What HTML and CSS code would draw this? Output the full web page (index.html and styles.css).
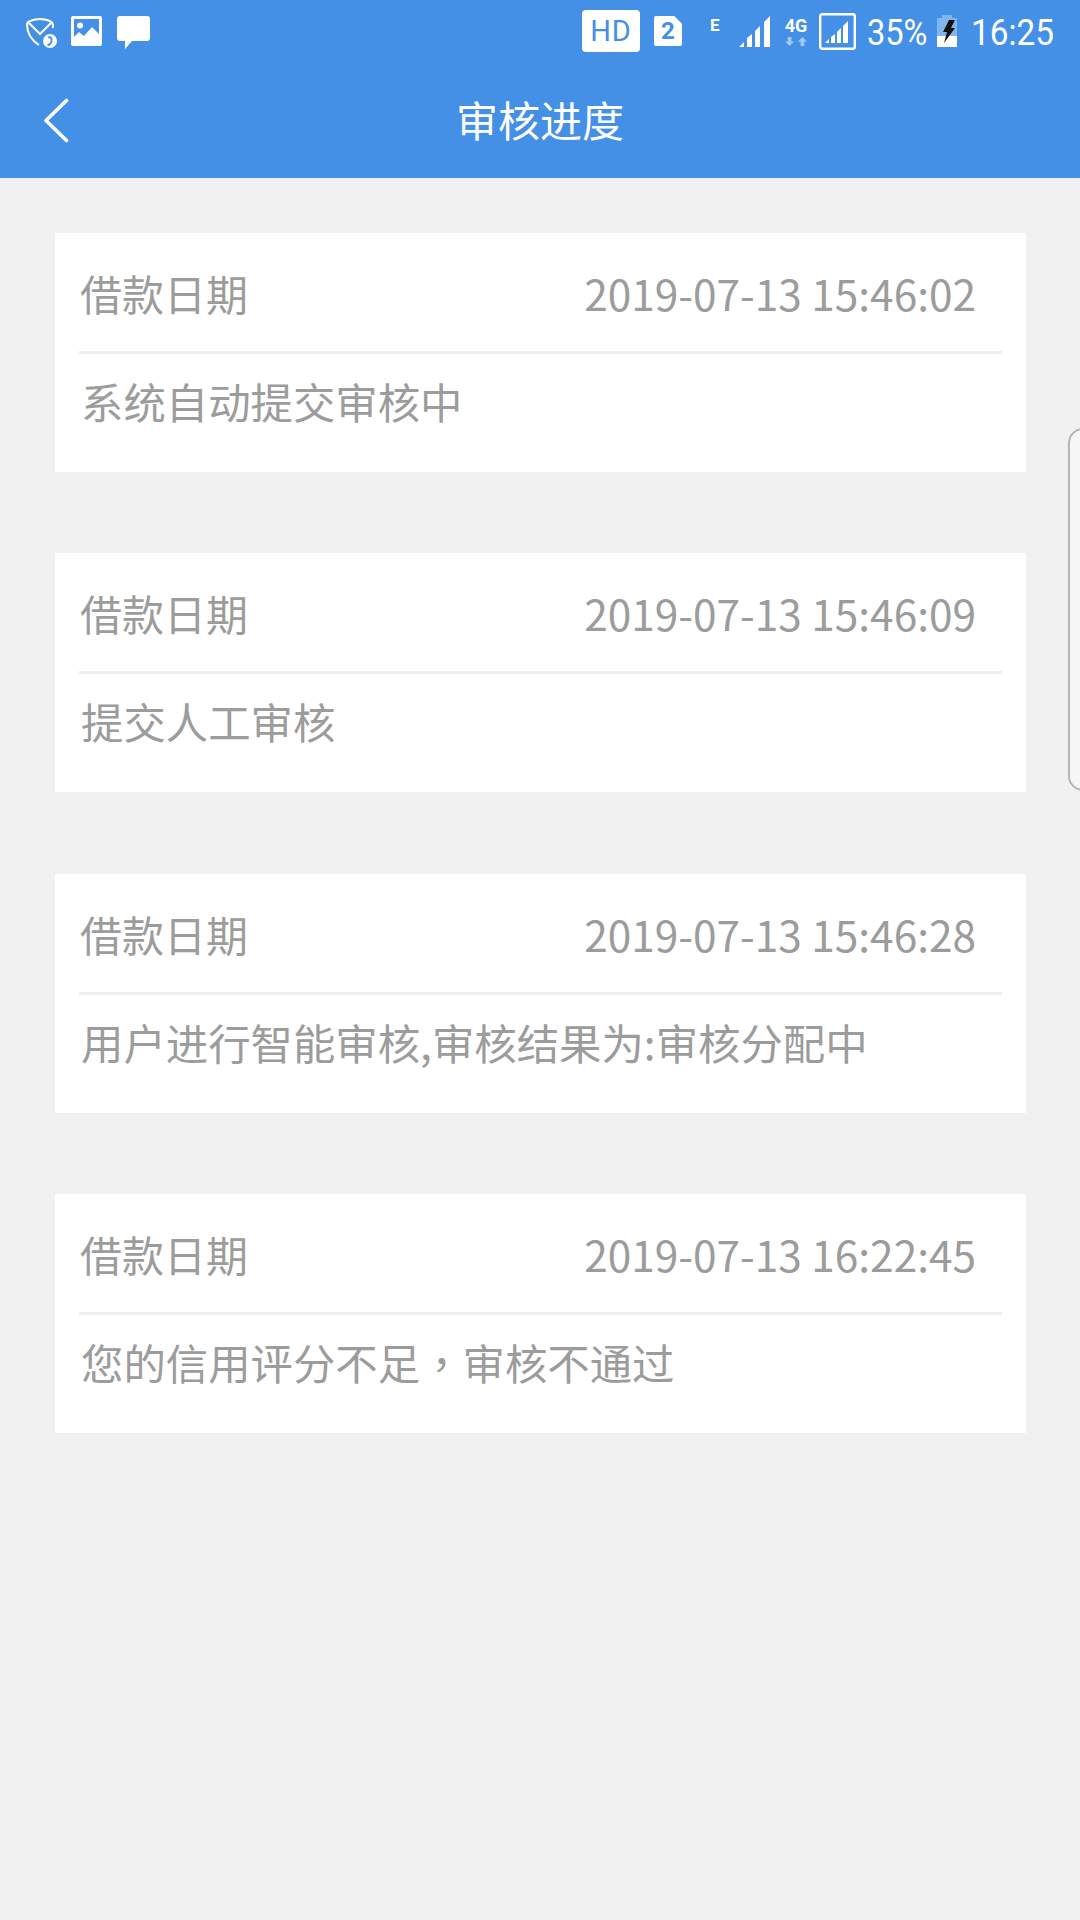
FILE: index.html
```html
<!DOCTYPE html>
<html lang="zh">
<head>
<meta charset="utf-8">
<title>审核进度</title>
<link rel="stylesheet" href="styles.css">
</head>
<body>
<header class="header">
  <div class="status">
    <div class="status-left">
      <svg class="ic-mail" viewBox="0 0 33 32"><path d="M14 29C6 24 2 17 2 8c0-1 .5-2 1.500-2.400C10 2 20 2 26 5.600 27.500 6.500 28 7.500 28 9c0 1-.1 2-.2 3" fill="none" stroke="#fff" stroke-width="2" stroke-linejoin="round"/><path d="M3 6l12 12L27 6" fill="none" stroke="#fff" stroke-width="2"/><circle cx="25" cy="25" r="7" fill="#fff"/><path d="M23 21.500c3-1 4 1 3.500 3.500s-1.500 4-4 4" fill="none" stroke="#4390e6" stroke-width="1.800"/></svg>
      <svg class="ic-img" viewBox="0 0 31 30"><path fill-rule="evenodd" fill="#fff" d="M2 0h27a2 2 0 0 1 2 2v26a2 2 0 0 1-2 2H2a2 2 0 0 1-2-2V2a2 2 0 0 1 2-2zM3 3v18l5-5 5 4 8-9 7 7V3z"/><circle cx="9" cy="9.500" r="3" fill="#fff"/></svg>
      <svg class="ic-chat" viewBox="0 0 33 33"><path fill="#fff" d="M3 0h27a3 3 0 0 1 3 3v19a3 3 0 0 1-3 3H15l-7 8v-8H3a3 3 0 0 1-3-3V3a3 3 0 0 1 3-3z"/></svg>
    </div>
    <div class="status-right">
      <span class="hd">HD</span>
      <span class="sim">2</span>
      <span class="net-e">E</span>
      <svg class="ic-signal" viewBox="0 0 32 31"><path fill="#fff" d="M0 31l5-5v5zM8 22l5-4v13H8zM16 15l5-5v21h-5zM25 6l6-6v31h-6z"/></svg>
      <span class="net-4g"><span class="net-4g-label">4G</span><svg class="ic-arrows" viewBox="0 0 24 10"><path fill="#a3c8f2" d="M3 0h4v5h3l-5 5-5-5h3zM17 10h4V5h3l-5-5-5 5h3z"/></svg></span>
      <svg class="ic-boxed" viewBox="0 0 37 37"><rect x="1.200" y="1.200" width="34.600" height="34.600" rx="2" fill="none" stroke="#fff" stroke-width="2.400"/><path fill="#fff" d="M6 30l4-4v4zM12 24l4-3v9h-4zM18 19l4-4v15h-4zM24 13l5-5v22h-5z"/></svg>
      <span class="pct">35%</span>
      <svg class="ic-batt" viewBox="0 0 20 32"><path fill="#82b5ee" d="M5 0h10v3h5v18H0V3h5z"/><rect y="21" width="20" height="11" fill="#fff"/><path fill="#111" d="M12 5h6l-4 8h4L7 28l3-11H6z"/></svg>
      <span class="time">16:25</span>
    </div>
  </div>
  <div class="nav">
    <svg class="back" viewBox="0 0 26 45"><path d="M23.500 2.500L3 22.500l20.500 20" fill="none" stroke="#fff" stroke-width="3.600" stroke-linecap="round" stroke-linejoin="round"/></svg>
    <h1 class="title">审核进度</h1>
  </div>
</header>

<main class="list">
  <section class="card">
    <div class="card-head"><span class="label">借款日期</span><span class="date">2019-07-13 15:46:02</span></div>
    <div class="card-rule"></div>
    <p class="card-body">系统自动提交审核中</p>
  </section>
  <section class="card">
    <div class="card-head"><span class="label">借款日期</span><span class="date">2019-07-13 15:46:09</span></div>
    <div class="card-rule"></div>
    <p class="card-body">提交人工审核</p>
  </section>
  <section class="card">
    <div class="card-head"><span class="label">借款日期</span><span class="date">2019-07-13 15:46:28</span></div>
    <div class="card-rule"></div>
    <p class="card-body">用户进行智能审核,审核结果为:审核分配中</p>
  </section>
  <section class="card">
    <div class="card-head"><span class="label">借款日期</span><span class="date">2019-07-13 16:22:45</span></div>
    <div class="card-rule"></div>
    <p class="card-body">您的信用评分不足<span class="tc-comma" lang="zh-TW">，</span>审核不通过</p>
  </section>
</main>

<div class="edge-handle"></div>
</body>
</html>
```
FILE: styles.css
```css
* { box-sizing: border-box; }
html, body { margin: 0; padding: 0; }
body {
  width: 1080px;
  height: 1920px;
  background: #f1f1f1;
  font-family: Roboto, "Noto Sans CJK SC", sans-serif;
  overflow: hidden;
  position: relative;
}
.header {
  height: 178px;
  background: #4390e6;
  color: #fff;
}
.status {
  height: 60px;
  display: flex;
  justify-content: space-between;
  align-items: flex-start;
}
.status-left {
  display: flex;
  align-items: flex-start;
  padding: 16px 0 0 25px;
}
.ic-mail { width: 33px; height: 32px; margin-right: 13px; }
.ic-img { width: 31px; height: 30px; margin-right: 15px; }
.ic-chat { width: 33px; height: 33px; }
.status-right {
  display: flex;
  align-items: flex-start;
  padding: 10px 27px 0 0;
}
.hd {
  width: 58px;
  height: 42px;
  background: #fff;
  border-radius: 4px;
  color: #4390e6;
  font-size: 29px;
  letter-spacing: 1px;
  line-height: 42px;
  text-align: center;
  margin-right: 14px;
}
.sim {
  width: 28px;
  height: 30px;
  margin-top: 6px;
  margin-right: 28px;
  background: #fff;
  color: #4390e6;
  font-size: 24px;
  font-weight: 700;
  line-height: 30px;
  text-align: center;
  clip-path: polygon(0 0, 72% 0, 100% 26%, 100% 100%, 0 100%);
  border-radius: 2px;
}
.net-e {
  width: 8px;
  margin-top: 8px;
  margin-right: 21px;
  font-size: 17px;
  font-weight: 700;
  line-height: 15px;
}
.ic-signal { width: 32px; height: 31px; margin-top: 6px; margin-right: 13px; }
.net-4g {
  width: 24px;
  margin-top: 7px;
  margin-right: 11px;
  display: flex;
  flex-direction: column;
  align-items: center;
}
.net-4g-label {
  font-size: 18px;
  font-weight: 700;
  line-height: 17px;
  white-space: nowrap;
}
.ic-arrows { width: 22px; height: 11px; margin-top: 2px; }
.ic-boxed { width: 37px; height: 37px; margin-top: 3px; margin-right: 11px; }
.pct {
  width: 60px;
  font-size: 37px;
  line-height: 46px;
  margin-right: 10px;
  white-space: nowrap;
  transform: scaleX(.88);
  transform-origin: left center;
}
.ic-batt { width: 20px; height: 32px; margin-top: 5px; margin-right: 14px; }
.time {
  width: 82px;
  font-size: 37px;
  line-height: 46px;
  white-space: nowrap;
  transform: scaleX(.9);
  transform-origin: left center;
}
.nav {
  height: 118px;
  position: relative;
  display: flex;
  align-items: center;
  justify-content: center;
}
.back {
  position: absolute;
  left: 43px;
  top: 38px;
  width: 26px;
  height: 45px;
}
.title {
  margin: 0;
  font-size: 42px;
  font-weight: 400;
  line-height: 60px;
  font-family: "Noto Sans CJK SC", sans-serif;
}
.list {
  display: flex;
  flex-direction: column;
  gap: 81.3px;
  padding: 55px 54px 0 55px;
}
.card {
  height: 239px;
  background: #fff;
  color: #9c9c9c;
  font-size: 42px;
  font-family: "Noto Sans CJK SC", sans-serif;
}
.card-head {
  height: 118px;
  display: flex;
  align-items: center;
  justify-content: space-between;
  padding: 2px 50px 0 25px;
}
.label {
  line-height: 60px;
}
.date {
  font-size: 42.4px;
  line-height: 60px;
}
.card-rule {
  height: 3px;
  margin: 0 24px;
  background: #eeeeee;
}
.card-body {
  margin: 0;
  padding: 17px 0 0 26px;
  font-size: 42.4px;
  line-height: 60px;
  white-space: nowrap;
}
.tc-comma {
  font-family: "Noto Sans CJK TC", sans-serif;
}
.edge-handle {
  position: absolute;
  top: 428px;
  left: 1068px;
  width: 30px;
  height: 363px;
  background: #f7f7f7;
  border: 2px solid #b5b5b5;
  border-radius: 16px;
}
```
